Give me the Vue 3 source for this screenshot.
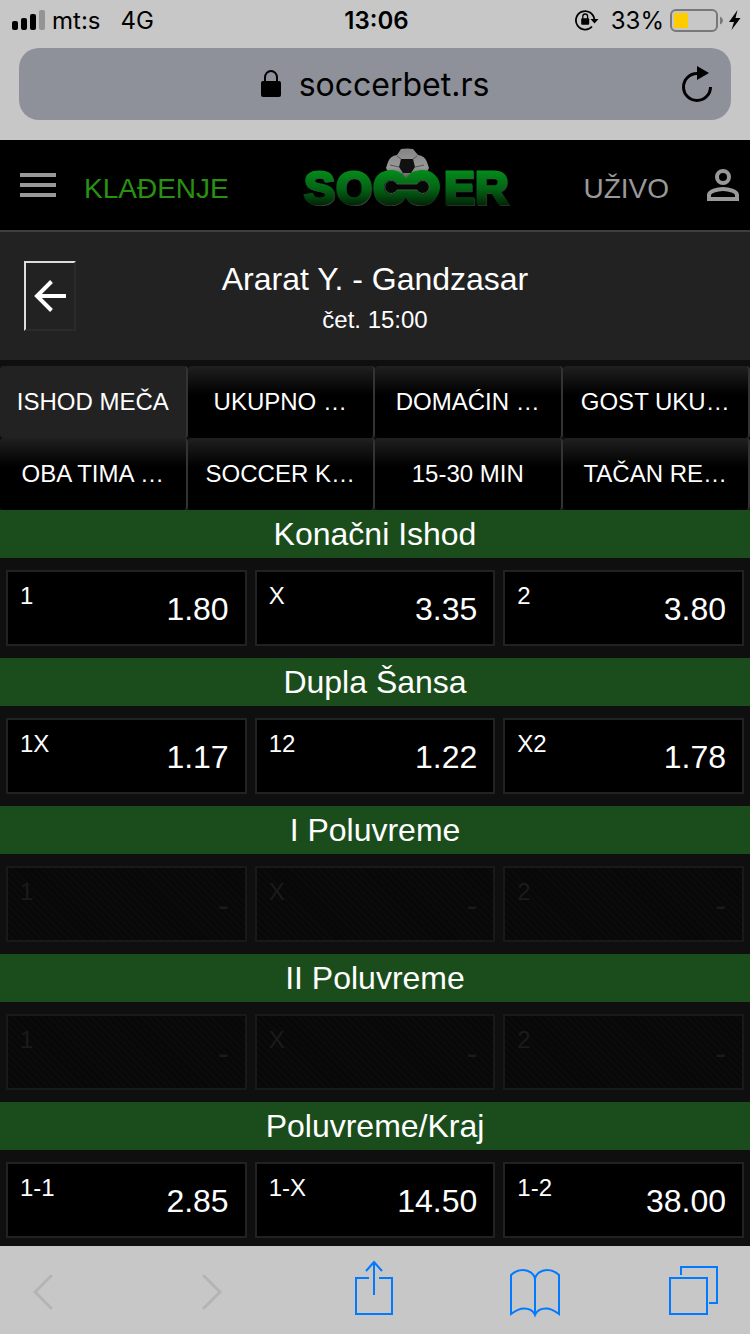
<script setup>
const tabs = [
  'ISHOD MEČA', 'UKUPNO …', 'DOMAĆIN …', 'GOST UKU…',
  'OBA TIMA …', 'SOCCER K…', '15-30 MIN', 'TAČAN RE…',
]

const markets = [
  { title: 'Konačni Ishod', odds: [['1', '1.80'], ['X', '3.35'], ['2', '3.80']] },
  { title: 'Dupla Šansa', odds: [['1X', '1.17'], ['12', '1.22'], ['X2', '1.78']] },
  { title: 'I Poluvreme', closed: true, odds: [['1', '-'], ['X', '-'], ['2', '-']] },
  { title: 'II Poluvreme', closed: true, odds: [['1', '-'], ['X', '-'], ['2', '-']] },
  { title: 'Poluvreme/Kraj', odds: [['1-1', '2.85'], ['1-X', '14.50'], ['1-2', '38.00']] },
]
</script>

<template>
  <div class="screen">
    <div class="chrome">
      <div class="status">
        <div class="status-left">
          <svg width="34" height="22" viewBox="0 0 34 22" aria-hidden="true">
            <rect x="0" y="12" width="6" height="9" rx="2" />
            <rect x="9" y="9" width="6" height="12" rx="2" />
            <rect x="18" y="5" width="6" height="16" rx="2" />
            <rect x="27" y="1" width="6" height="20" rx="2" fill="#949494" />
          </svg>
          <span class="carrier">mt:s</span>
          <span>4G</span>
        </div>
        <time class="clock">13:06</time>
        <div class="status-right">
          <svg width="24" height="22" viewBox="0 0 24 22" aria-hidden="true">
            <path d="M17 17.500A9.200 9.200 0 1 1 19.300 10.500" fill="none" stroke="#000" stroke-width="1.8" />
            <path d="M15.500 10h8l-4 4.500z" />
            <rect x="6.200" y="9.200" width="8" height="6.500" rx="1" />
            <path d="M7.800 10V7.600a2.400 2.600 0 0 1 4.800 0V10" fill="none" stroke="#000" stroke-width="1.3" />
          </svg>
          <span class="percent">33%</span>
          <svg width="71" height="26" viewBox="0 -2 71 26" aria-hidden="true">
            <rect x="1" y="1" width="46" height="21" rx="5" fill="none" stroke="#787878" stroke-width="2" />
            <rect x="4" y="4" width="14" height="15" fill="#fc0" />
            <path d="M50 7.500q3 1.500 3 4t-3 4z" fill="#787878" />
            <path d="M67.500 1L59 13h5L61.500 21 70.500 9h-5z" />
          </svg>
        </div>
      </div>
      <div class="address">
        <div class="site">
          <svg width="20" height="28" viewBox="0 0 20 28" aria-hidden="true">
            <rect x="0" y="11" width="20" height="16" rx="2" />
            <path d="M4 12V7.500a6 6.500 0 0 1 12 0V12" fill="none" stroke="#000" stroke-width="2" />
          </svg>
          <span>soccerbet.rs</span>
        </div>
        <button class="reload" aria-label="Reload">
          <svg width="32" height="38" viewBox="0 0 32 38" aria-hidden="true">
            <path d="M17 8.500H16A13.500 13.500 0 1 0 29.500 22" fill="none" stroke="#000" stroke-width="3" />
            <path d="M16 1l12 7-12 7z" />
          </svg>
        </button>
      </div>
    </div>

    <header class="site-header">
      <button class="menu" aria-label="Meni">
        <svg width="36" height="24" viewBox="0 0 36 24" aria-hidden="true">
          <path d="M0 2h36M0 12h36M0 22h36" stroke="#999" stroke-width="4" />
        </svg>
      </button>
      <a class="nav-link active" href="#kladjenje">KLAĐENJE</a>
      <a class="logo" href="#home" aria-label="SOCCER">
        <svg width="216" height="76" viewBox="0 0 216 76" aria-hidden="true">
          <defs>
            <linearGradient id="turf" x1="0" y1="24" x2="0" y2="60" gradientUnits="userSpaceOnUse">
              <stop offset="0" stop-color="#048a1b" />
              <stop offset="0.5" stop-color="#036314" />
              <stop offset="1" stop-color="#021d05" />
            </linearGradient>
            <linearGradient id="leather" x1="0" y1="0" x2="0" y2="1">
              <stop offset="0" stop-color="#858585" />
              <stop offset="0.6" stop-color="#999" />
              <stop offset="1" stop-color="#55505a" />
            </linearGradient>
          </defs>
          <path d="M103 2q6-1 12 0l5 6q7 1 9 7l2 6-2 4-9 2-11 6-11-6-8-2-2-4 2-6q2-6 9-7z" fill="url(#leather)" />
          <path d="M103 12h12l2 8-4 6h-8l-4-6z" fill="#111" />
          <path d="M99 9l4 3M119 9l-4 3M92 18l9 2M126 18l-9 2M105 26l-2 4M113 26l2 4" fill="none" stroke="#555" />
          <text class="logo-shadow" x="7 39 75 107 147 178" y="58">SOCƆER</text>
          <text class="logo-text" x="6 38 75 107 146 177" y="57">SOCƆER</text>
          <g fill="none" stroke="url(#turf)" stroke-width="10">
            <circle cx="93" cy="40" r="12" />
            <circle cx="125" cy="40" r="12" />
          </g>
          <path d="M99 37h20a6.500 6.500 0 1 1 0 6H99a6.500 6.500 0 1 1 0-6z" fill="#050805" stroke="#4b554b" />
        </svg>
      </a>
      <a class="nav-link live" href="#uzivo">UŽIVO</a>
      <button class="profile" aria-label="Profil">
        <svg width="32" height="32" viewBox="0 0 32 32" fill="none" stroke="#999" stroke-width="4" aria-hidden="true">
          <circle cx="16" cy="8" r="6" />
          <path d="M2 30v-4c0-3.500 8-6 14-6s14 2.500 14 6v4z" />
        </svg>
      </button>
    </header>

    <section class="match">
      <button class="back" aria-label="Nazad">
        <svg width="32" height="32" viewBox="0 0 32 32" fill="none" stroke="#fff" stroke-width="4" aria-hidden="true">
          <path d="M32 16H3M17.500 1.500L3 16l14.500 14.500" />
        </svg>
      </button>
      <div class="match-info">
        <h1>Ararat Y. - Gandzasar</h1>
        <p>čet. 15:00</p>
      </div>
    </section>

    <nav class="tabs">
      <button v-for="(tab, i) in tabs" :key="tab" :class="['tab', { selected: i === 0 }]">{{ tab }}</button>
    </nav>

    <main>
      <section v-for="m in markets" :key="m.title" class="market">
        <h2>{{ m.title }}</h2>
        <div class="odds">
          <button v-for="[name, value] in m.odds" :key="name" class="odd" :disabled="m.closed">
            <span class="name">{{ name }}</span>
            <span class="value">{{ value }}</span>
          </button>
        </div>
      </section>
    </main>

    <nav class="toolbar">
      <button class="wide" aria-label="Back" disabled>
        <svg width="20" height="40" viewBox="0 -4 20 40" class="dim" aria-hidden="true"><path d="M18 2L2 18l16 16" /></svg>
      </button>
      <button class="wide" aria-label="Forward" disabled>
        <svg width="20" height="40" viewBox="0 -4 20 40" class="dim" aria-hidden="true"><path d="M2 2l16 16L2 34" /></svg>
      </button>
      <button aria-label="Share">
        <svg width="42" height="60" viewBox="0 0 42 60" class="blue" aria-hidden="true">
          <path d="M14 18H1v36h36V18H24M19 35V3M11 11l8-9 8 9" />
        </svg>
      </button>
      <button aria-label="Bookmarks">
        <svg width="50" height="60" viewBox="0 0 50 60" class="blue" aria-hidden="true">
          <path d="M25 55V20C25 14 19 10 13 10S4 12 1 15V54C5 51 9 48.500 14 48.500S23 50 25 55C27 50 31 48.500 36 48.500S45 51 49 54V15C46 12 43 10 37 10S25 14 25 20" />
        </svg>
      </button>
      <button aria-label="Tabs">
        <svg width="50" height="60" viewBox="0 0 50 60" class="blue" aria-hidden="true">
          <path d="M1 18h37v36H1zM12 15V7h36v36h-8" />
        </svg>
      </button>
    </nav>
  </div>
</template>

<style>
body {
  margin: 0;
  background: #0f0f0f;
}
</style>

<style scoped>
.screen {
  min-height: 100vh;
  display: flex;
  flex-direction: column;
  background: #0f0f0f;
  color: #fff;
  font-family: "Liberation Sans", Arial, sans-serif;
}
button {
  display: flex;
  align-items: center;
  justify-content: center;
  margin: 0;
  padding: 0;
  border: 0;
  background: none;
  color: inherit;
  font: inherit;
}
svg {
  display: block;
  flex: none;
}
a {
  text-decoration: none;
}
h1, h2, p {
  margin: 0;
  font-weight: 400;
}
.chrome {
  background: #c7c7c7;
  color: #000;
  font-family: Inter, sans-serif;
  padding-bottom: 20px;
}
.status {
  display: grid;
  grid-template-columns: 1fr auto 1fr;
  align-items: center;
  height: 40px;
  margin-bottom: 8px;
  padding: 0 9px 0 12px;
  font-size: 24px;
}
.status-left, .status-right {
  display: flex;
  align-items: center;
}
.status-right {
  justify-content: flex-end;
}
.carrier {
  margin: 0 20px 0 6px;
}
.clock {
  font-weight: 600;
}
.percent {
  margin: 0 6px 0 12px;
}
.address {
  display: grid;
  grid-template-columns: 1fr auto 1fr;
  align-items: center;
  height: 72px;
  margin: 0 19px;
  padding: 0 18px;
  border-radius: 20px;
  background: #8e9199;
  font-size: 32px;
}
.site {
  grid-column: 2;
  display: flex;
  align-items: center;
  gap: 18px;
}
.reload {
  justify-self: end;
}
.site-header {
  display: flex;
  align-items: center;
  height: 90px;
  padding: 0 11px 0 20px;
  background: #000;
  border-bottom: 2px solid #3e3e3e;
}
.nav-link {
  margin: 8px 0 0 28px;
  font-size: 28px;
  color: #999;
}
.nav-link.active {
  color: #299112;
}
.logo {
  margin: 0 auto;
}
.nav-link.live {
  margin: 8px 38px 0 0;
}
.logo-text, .logo-shadow {
  font-family: "Liberation Sans", Arial, sans-serif;
  font-size: 46px;
  font-weight: 700;
}
.logo-text {
  fill: url(#turf);
  stroke: url(#turf);
  stroke-width: 3px;
}
.logo-shadow {
  fill: #444;
  stroke: #444;
  stroke-width: 2px;
}
.match {
  display: grid;
  grid-template-columns: 52px 1fr 52px;
  align-items: center;
  height: 128px;
  padding: 0 24px;
  background: #222;
}
.back {
  height: 70px;
  border: 2px solid;
  border-color: #ddd #2b2b2b #2b2b2b #ddd;
}
.match-info {
  padding-top: 3px;
  text-align: center;
}
h1 {
  font-size: 32px;
  line-height: 44px;
}
.match-info p {
  font-size: 24px;
  line-height: 38px;
}
.tabs {
  display: grid;
  grid-template-columns: repeat(4, 1fr);
  margin-top: 6px;
}
.tab {
  height: 72px;
  border-right: 2px solid #333;
  border-radius: 4px;
  background: linear-gradient(#202020, #000 40%);
  font-size: 24px;
  white-space: nowrap;
}
.tab.selected {
  background: #222;
}
h2 {
  background: #1b4d1c;
  font-size: 32px;
  line-height: 48px;
  text-align: center;
}
.odds {
  display: grid;
  grid-template-columns: repeat(3, 1fr);
  gap: 8px;
  padding: 12px 6px;
}
.market:last-child .odds {
  padding-bottom: 8px;
}
.odd {
  align-items: stretch;
  justify-content: space-between;
  height: 76px;
  padding: 0 16px 0 12px;
  border: 2px solid #222;
  background: #000;
}
.odd:disabled {
  border-color: #191919;
  background: repeating-linear-gradient(45deg, #080808 0 3px, #0b0b0b 3px 5px);
  color: #1b1b1b;
}
.name {
  font-size: 24px;
  line-height: 48px;
}
.value {
  font-size: 32px;
  line-height: 74px;
}
.toolbar {
  display: flex;
  align-items: center;
  justify-content: space-between;
  height: 88px;
  margin-top: auto;
  padding: 0 31px 0 13px;
  background: #c7c7c7;
}
.toolbar button {
  width: 50px;
}
.toolbar button.wide {
  width: 60px;
}
.dim {
  fill: none;
  stroke: #b4b4b4;
  stroke-width: 3px;
  stroke-linecap: round;
}
.blue {
  fill: none;
  stroke: #007aff;
  stroke-width: 2px;
}
</style>
